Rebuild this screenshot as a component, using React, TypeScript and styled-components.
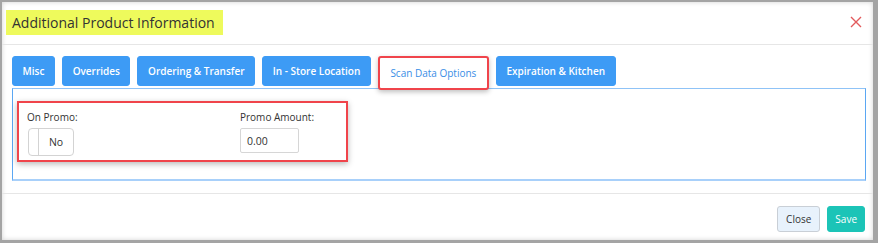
import styled, { createGlobalStyle } from 'styled-components';

const GlobalStyle = createGlobalStyle`
  html, body {
    margin: 0;
    padding: 0;
    background: #a4a4a4;
    font-family: "Open Sans", "Liberation Sans", sans-serif;
  }
  * { box-sizing: border-box; }
`;

const tabs = ['Misc', 'Overrides', 'Ordering & Transfer', 'In - Store Location', 'Scan Data Options', 'Expiration & Kitchen'];

function App() {
  return (
    <>
      <GlobalStyle />
      <Modal>
        <Header>
          <Title>Additional Product Information</Title>
          <CloseIcon viewBox="0 0 12 12">
            <path d="M1 1 L11 11 M11 1 L1 11" stroke="#e25a5c" strokeWidth="1.4" />
          </CloseIcon>
        </Header>
        <Body>
          <TabBar>
            {tabs.map((t) => (
              <Tab key={t} $active={t === 'Scan Data Options'}>
                {t}
              </Tab>
            ))}
          </TabBar>
          <Panel>
            <Highlight>
              <Field>
                <Label>On Promo:</Label>
                <Toggle>
                  <span className="knob" />
                  <span className="text">No</span>
                </Toggle>
              </Field>
              <Field>
                <Label>Promo Amount:</Label>
                <Input defaultValue="0.00" />
              </Field>
            </Highlight>
          </Panel>
        </Body>
        <Footer>
          <Button>Close</Button>
          <Button $primary>Save</Button>
        </Footer>
      </Modal>
    </>
  );
}

const Modal = styled.div`
  margin: 2px 5px 3px 2px;
  height: 238px;
  background: #fff;
  box-shadow: inset 0 0 5px rgba(0, 0, 0, 0.18);
  display: flex;
  flex-direction: column;
`;

const Header = styled.div`
  height: 43px;
  border-bottom: 1px solid #e6e6e6;
  display: flex;
  align-items: center;
  justify-content: space-between;
  padding: 0 11px 2px 4px;
`;

const Title = styled.span`
  background: #eefa5c;
  color: #333;
  font-size: 14px;
  line-height: 25px;
  padding: 0 8px 0 6px;
`;

const CloseIcon = styled.svg`
  width: 12px;
  height: 12px;
`;

const Body = styled.div`
  padding: 11px 7px 0 10px;
`;

const TabBar = styled.div`
  display: flex;
  gap: 7px;
  align-items: flex-start;
`;

const Tab = styled.button<{ $active?: boolean }>`
  height: ${(p) => (p.$active ? '34px' : '30px')};
  padding: 0 ${(p) => (p.$active ? '10.5px' : '9.6px')};
  margin-bottom: ${(p) => (p.$active ? '-4px' : '0')};
  font-family: "Open Sans", "Liberation Sans", sans-serif;
  font-size: 10px;
  border-radius: 3px;
  cursor: pointer;
  border: ${(p) => (p.$active ? '2px solid #f0444b' : '1px solid #3d9bf5')};
  background: ${(p) => (p.$active ? '#fff' : '#3d9bf5')};
  color: ${(p) => (p.$active ? '#3a8ee6' : '#fff')};
  font-weight: ${(p) => (p.$active ? 400 : 600)};
  box-shadow: ${(p) => (p.$active ? '0 2px 5px rgba(0,0,0,0.25)' : 'none')};
  position: relative;
  z-index: ${(p) => (p.$active ? 1 : 0)};
`;

const Panel = styled.div`
  margin-top: 2px;
  height: 93px;
  border: 1px solid #5ba7f3;
  border-top-color: #8fc3f7;
  border-bottom: 2px solid #a8d0fa;
  padding: 12px 0 0 4px;
`;

const Highlight = styled.div`
  width: 331px;
  height: 61px;
  border: 2px solid #f0444b;
  box-shadow: 0 2px 6px rgba(0, 0, 0, 0.28);
  display: grid;
  grid-template-columns: 213px auto;
  padding: 7px 0 0 8px;
`;

const Field = styled.div`
  display: flex;
  flex-direction: column;
  gap: 4px;
`;

const Label = styled.label`
  font-size: 10px;
  color: #333;
  line-height: 14px;
`;

const Toggle = styled.div`
  width: 46px;
  height: 28px;
  margin-left: 1px;
  border: 1px solid #d3d3d3;
  border-radius: 4px;
  display: flex;
  .knob {
    width: 10px;
    border-right: 1px solid #d3d3d3;
  }
  .text {
    flex: 1;
    display: flex;
    align-items: center;
    justify-content: center;
    font-size: 10.5px;
    color: #333;
  }
`;

const Input = styled.input`
  width: 59px;
  height: 25px;
  border: 1px solid #d6d6d6;
  border-radius: 2px;
  padding: 0 6px;
  font-family: "Open Sans", "Liberation Sans", sans-serif;
  font-size: 10.5px;
  color: #333;
  outline: none;
`;

const Footer = styled.div`
  margin-top: 12px;
  border-top: 1px solid #e6e6e6;
  display: flex;
  justify-content: flex-end;
  gap: 7px;
  padding: 12px 8px 0 0;
`;

const Button = styled.button<{ $primary?: boolean }>`
  height: 26px;
  padding: 0 ${(p) => (p.$primary ? '7px' : '8px')};
  border-radius: 3px;
  font-family: "Open Sans", "Liberation Sans", sans-serif;
  font-size: 10px;
  cursor: pointer;
  border: 1px solid ${(p) => (p.$primary ? '#1cc4b7' : '#c9cfd6')};
  background: ${(p) => (p.$primary ? '#1cc4b7' : '#e8f2fc')};
  color: ${(p) => (p.$primary ? '#fff' : '#333')};
`;

export default App;
